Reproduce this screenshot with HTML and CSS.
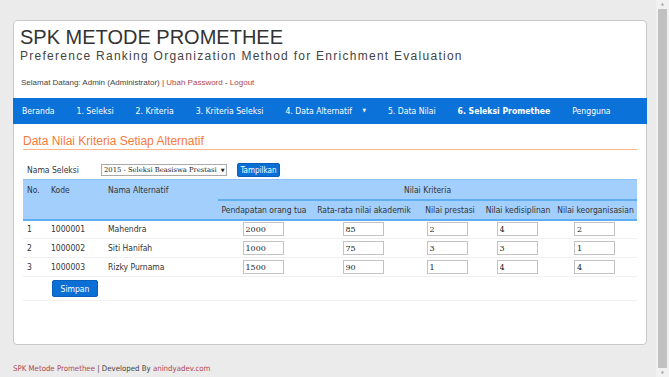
FILE: index.html
```html
<!DOCTYPE html>
<html lang="id">

<head>
    <meta charset="UTF-8">
    <title>SPK Metode Promethee</title>
    <link rel="stylesheet" href="styles.css">
</head>

<body>
    <div class="page">
        <div class="card">
            <div class="head">
                <h1>SPK METODE PROMETHEE</h1>
                <p class="subtitle">Preference Ranking Organization Method for Enrichment Evaluation</p>
                <p class="welcome">Selamat Datang: Admin (Administrator) | <a href="#">Ubah Password</a> - <a href="#">Logout</a></p>
            </div>
            <nav class="menu">
                <a href="#">Beranda</a>
                <a href="#">1. Seleksi</a>
                <a href="#">2. Kriteria</a>
                <a href="#">3. Kriteria Seleksi</a>
                <a href="#" class="dropdown">4. Data Alternatif <span class="caret">&#9660;</span></a>
                <a href="#">5. Data Nilai</a>
                <a href="#" class="active">6. Seleksi Promethee</a>
                <a href="#">Pengguna</a>
            </nav>
            <div class="content">
                <h2>Data Nilai Kriteria Setiap Alternatif</h2>
                <form class="filter">
                    <label>Nama Seleksi</label>
                    <span class="select"><span class="option">2015 - Seleksi Beasiswa Prestasi</span><span class="arrow">&#9660;</span></span>
                    <button type="button" class="btn btn-small">Tampilkan</button>
                </form>
                <table class="grid">
                    <colgroup>
                        <col style="width: 24px">
                        <col style="width: 57px">
                        <col style="width: 114px">
                        <col style="width: 92px">
                        <col style="width: 108px">
                        <col style="width: 64px">
                        <col style="width: 72px">
                        <col style="width: 83px">
                    </colgroup>
                    <thead>
                        <tr class="top">
                            <th rowspan="2">No.</th>
                            <th rowspan="2">Kode</th>
                            <th rowspan="2">Nama Alternatif</th>
                            <th colspan="5" class="group">Nilai Kriteria</th>
                        </tr>
                        <tr class="sub">
                            <th>Pendapatan orang tua</th>
                            <th>Rata-rata nilai akademik</th>
                            <th>Nilai prestasi</th>
                            <th>Nilai kedisiplinan</th>
                            <th>Nilai keorganisasian</th>
                        </tr>
                    </thead>
                    <tbody>
                        <tr>
                            <td>1</td>
                            <td>1000001</td>
                            <td>Mahendra</td>
                            <td class="val"><input type="text" value="2000"></td>
                            <td class="val"><input type="text" value="85"></td>
                            <td class="val"><input type="text" value="2"></td>
                            <td class="val"><input type="text" value="4"></td>
                            <td class="val"><input type="text" value="2"></td>
                        </tr>
                        <tr>
                            <td>2</td>
                            <td>1000002</td>
                            <td>Siti Hanifah</td>
                            <td class="val"><input type="text" value="1000"></td>
                            <td class="val"><input type="text" value="75"></td>
                            <td class="val"><input type="text" value="3"></td>
                            <td class="val"><input type="text" value="3"></td>
                            <td class="val"><input type="text" value="1"></td>
                        </tr>
                        <tr>
                            <td>3</td>
                            <td>1000003</td>
                            <td>Rizky Purnama</td>
                            <td class="val"><input type="text" value="1500"></td>
                            <td class="val"><input type="text" value="90"></td>
                            <td class="val"><input type="text" value="1"></td>
                            <td class="val"><input type="text" value="4"></td>
                            <td class="val"><input type="text" value="4"></td>
                        </tr>
                        <tr class="actions">
                            <td></td>
                            <td colspan="7"><button type="button" class="btn">Simpan</button></td>
                        </tr>
                    </tbody>
                </table>
            </div>
        </div>
        <div class="footer"><a href="#">SPK Metode Promethee</a> | Developed By <a href="#">anindyadev.com</a></div>
    </div>
    <div class="scrollbar">
        <span class="arrow-up">&#9650;</span>
        <span class="thumb"></span>
        <span class="arrow-down">&#9660;</span>
    </div>
</body>

</html>
```

FILE: styles.css
```css
* {
    box-sizing: border-box;
}

body {
    margin: 0;
    height: 377px;
    overflow: hidden;
    display: flex;
    background-color: #ebebeb;
    font-family: 'DejaVu Sans Condensed', 'DejaVu Sans', sans-serif;
    font-size: 8.5px;
    color: #333;
}

a {
    text-decoration: none;
}

.page {
    flex: 1;
    padding: 20px 9px 0 13px;
}

.card {
    background-color: #fff;
    border: 1px solid #c9c9c9;
    border-radius: 4px;
    height: 325px;
}

.head {
    padding: 4px 6px 0 6px;
    height: 77px;
    font-family: 'Liberation Sans', Arial, sans-serif;
}

h1 {
    margin: 0;
    font-size: 20px;
    font-weight: normal;
    line-height: 24px;
    color: #333;
}

.subtitle {
    margin: 0;
    font-size: 12px;
    line-height: 15px;
    letter-spacing: 1.27px;
    color: #444;
}

.welcome {
    margin: 14px 0 0 1px;
    font-size: 8px;
    color: #444;
}

.welcome a {
    color: #b0464f;
}

.menu {
    display: flex;
    height: 26px;
    align-items: center;
    margin: 0 -1px;
    background-color: #0b72d9;
}

.menu a {
    color: #fff;
    padding: 0 11px;
    font-size: 8.6px;
    white-space: nowrap;
}

.menu a:first-child {
    padding-left: 9px;
}

.menu .caret {
    font-size: 5px;
    margin-left: 8px;
    vertical-align: 2px;
}

.menu .active {
    font-weight: bold;
}

.content {
    padding: 0 9px;
}

h2 {
    margin: 10px 0 0 0;
    padding-bottom: 1px;
    font-family: 'Liberation Sans', Arial, sans-serif;
    font-size: 12px;
    font-weight: normal;
    color: #f57a3c;
    border-bottom: 1px solid #fbb68a;
}

.filter {
    display: flex;
    align-items: center;
    height: 14px;
    margin: 13px 0 2px 0;
}

.filter label {
    width: 78px;
    padding-left: 4px;
}

.select {
    display: flex;
    align-items: center;
    width: 126px;
    height: 12px;
    border: 1px solid #a9a9a9;
    font-family: 'DejaVu Serif', 'Liberation Serif', serif;
    font-size: 6.8px;
    padding-left: 2px;
    white-space: nowrap;
    color: #222;
}

.select .arrow {
    font-size: 5px;
    margin-left: 4px;
}

.btn {
    border: 1px solid #0a5fb8;
    border-radius: 2px;
    background-color: #0b6fd6;
    color: #fff;
    font-family: 'DejaVu Sans Condensed', 'DejaVu Sans', sans-serif;
    font-size: 8.5px;
    padding: 0;
}

.btn-small {
    margin-left: 10px;
    width: 43px;
    height: 14px;
    font-size: 8px;
}

.grid {
    width: 614px;
    table-layout: fixed;
    border-collapse: collapse;
}

.grid th {
    font-weight: normal;
    background-color: #a3cffd;
    text-align: left;
    white-space: nowrap;
    padding: 0 4px;
}

.grid .top th {
    height: 20px;
    vertical-align: top;
    padding-top: 5px;
    border-top: 1px solid #8cc2f8;
}

.grid .top th.group {
    text-align: center;
    border-bottom: 2px solid #5eaef3;
}

.grid .sub th {
    height: 20px;
    text-align: center;
    padding: 0;
    border-bottom: 2px solid #5eaef3;
}

.grid thead tr.top th[rowspan] {
    border-bottom: 2px solid #5eaef3;
}

.grid td {
    height: 19px;
    padding: 0 4px;
    border-bottom: 1px solid #f0f0f0;
    white-space: nowrap;
}

.grid td.val {
    text-align: center;
    padding-right: 6px;
}

.grid td.val:nth-child(6) {
    padding-right: 10px;
}

.grid input {
    width: 41px;
    height: 14px;
    border: 1px solid #c3c3c3;
    padding: 0 2px;
    font-family: 'DejaVu Serif', 'Liberation Serif', serif;
    font-size: 8px;
    color: #222;
}

.grid .actions td {
    height: 24px;
    padding: 0 0 0 5px;
}

.grid .actions .btn {
    width: 46px;
    height: 17px;
}

.footer {
    margin-top: 19px;
    font-size: 7.8px;
    color: #444;
}

.footer a {
    color: #b0464f;
}

.scrollbar {
    width: 13px;
    height: 377px;
    background-color: #f1f1f1;
    display: flex;
    flex-direction: column;
    align-items: center;
    color: #a3a3a3;
    font-size: 4px;
}

.arrow-up,
.arrow-down {
    height: 8px;
    line-height: 8px;
}

.thumb {
    flex: 1;
    width: 9px;
    margin: 1px 0;
    background-color: #c1c1c1;
}
```
